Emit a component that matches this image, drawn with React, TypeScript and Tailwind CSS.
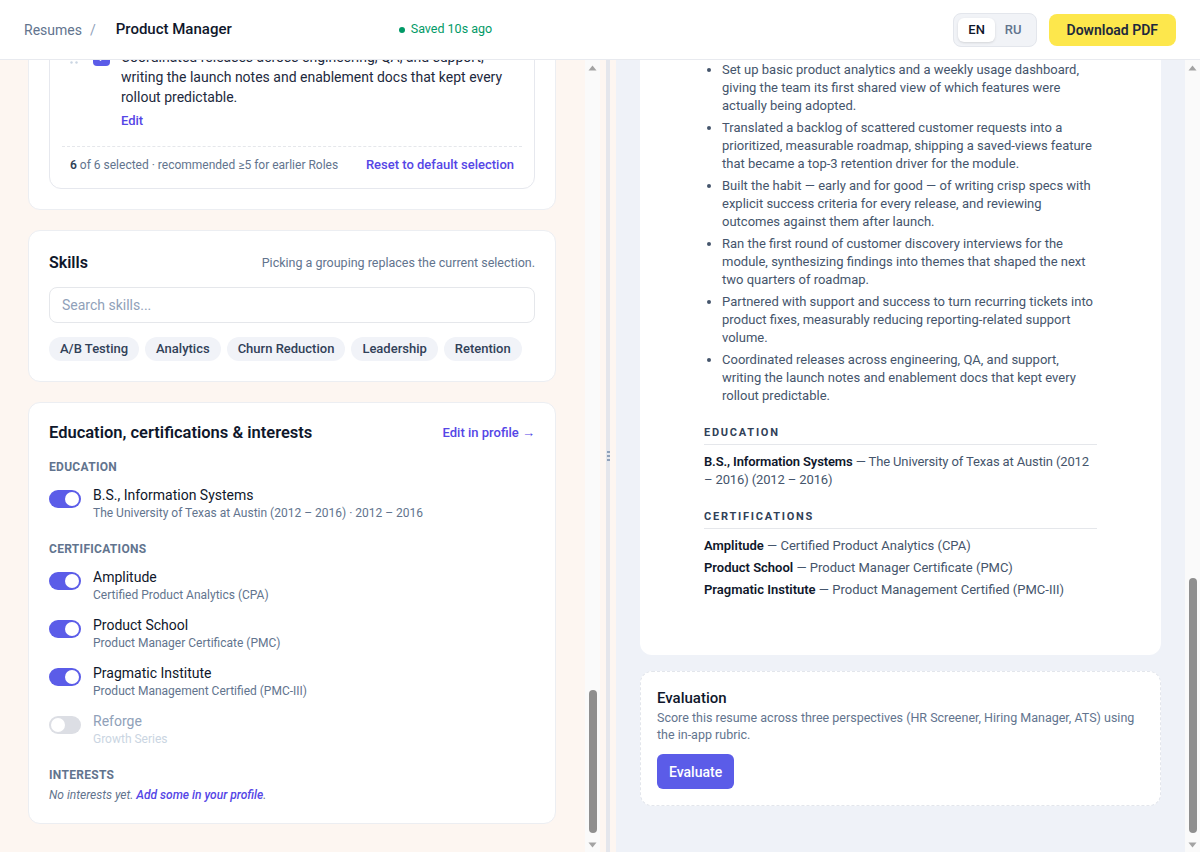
import { useLayoutEffect, useRef } from 'react';

type Role = {
  title: string;
  company: string;
  dates: string;
  bullets: string[];
};

const roles: Role[] = [
  {
    title: 'Senior Product Manager',
    company: 'Lumen Analytics',
    dates: 'Mar 2020 – Present',
    bullets: [
      'Owned the reporting suite roadmap end to end, growing weekly active accounts by 38% across two annual planning cycles.',
      'Led discovery with 40+ enterprise customers and turned the findings into a scheduled-exports launch that cut churn in the segment.',
      'Partnered with design and engineering leads to ship a self-serve onboarding flow, halving time-to-first-report for new teams.',
      'Defined the pricing and packaging for the analytics add-on, which reached $1.2M ARR within its first three quarters.',
      'Introduced a lightweight experiment review that raised the share of launches shipped with a measurable success metric.',
      'Mentored two associate PMs through their first launches and set up the team’s shared discovery repository.',
    ],
  },
  {
    title: 'Product Manager',
    company: 'Northwind Labs',
    dates: 'Jun 2018 – Feb 2020',
    bullets: [
      'Ran the integrations program, shipping connectors for Salesforce and HubSpot that drove 22% of new pipeline in 2019.',
      'Rebuilt the permissions model with engineering, unblocking three enterprise deals that had stalled in security review.',
      'Set quarterly OKRs with sales and support leadership and reported progress in a monthly product review.',
      'Cut the bug backlog by 60% by introducing severity triage and a weekly quality rotation across squads.',
      'Wrote the launch plans and customer-facing release notes for every major release in the product line.',
    ],
  },
  {
    title: 'Associate Product Manager',
    company: 'Brightline Software',
    dates: 'Jul 2016 – May 2018',
    bullets: [
      'Set up basic product analytics and a weekly usage dashboard, giving the team its first shared view of which features were actually being adopted.',
      'Translated a backlog of scattered customer requests into a prioritized, measurable roadmap, shipping a saved-views feature that became a top-3 retention driver for the module.',
      'Built the habit — early and for good — of writing crisp specs with explicit success criteria for every release, and reviewing outcomes against them after launch.',
      'Ran the first round of customer discovery interviews for the module, synthesizing findings into themes that shaped the next two quarters of roadmap.',
      'Partnered with support and success to turn recurring tickets into product fixes, measurably reducing reporting-related support volume.',
      'Coordinated releases across engineering, QA, and support, writing the launch notes and enablement docs that kept every rollout predictable.',
    ],
  },
];

const skills = ['A/B Testing', 'Analytics', 'Churn Reduction', 'Leadership', 'Retention'];

const certs = [
  { org: 'Amplitude', name: 'Certified Product Analytics (CPA)', on: true },
  { org: 'Product School', name: 'Product Manager Certificate (PMC)', on: true },
  { org: 'Pragmatic Institute', name: 'Product Management Certified (PMC-III)', on: true },
  { org: 'Reforge', name: 'Growth Series', on: false },
];

function Grip() {
  return (
    <svg width="8" height="12" viewBox="0 0 8 12" className="mt-[5px] shrink-0 fill-slate-300">
      <circle cx="1.5" cy="1.5" r="1.2" />
      <circle cx="6.5" cy="1.5" r="1.2" />
      <circle cx="1.5" cy="6" r="1.2" />
      <circle cx="6.5" cy="6" r="1.2" />
      <circle cx="1.5" cy="10.5" r="1.2" />
      <circle cx="6.5" cy="10.5" r="1.2" />
    </svg>
  );
}

function Checkbox() {
  return (
    <span className="ml-[15px] mt-[2px] flex h-[17px] w-[17px] shrink-0 items-center justify-center rounded-[4px] bg-[#5b5ce8]">
      <svg width="11" height="11" viewBox="0 0 12 12" fill="none">
        <path d="M2.5 6.3l2.4 2.4 4.8-5.2" stroke="white" strokeWidth="2" strokeLinecap="round" strokeLinejoin="round" />
      </svg>
    </span>
  );
}

function Toggle({ on }: { on: boolean }) {
  return (
    <span
      className={
        on
          ? 'mt-[5px] flex h-[18px] w-8 shrink-0 items-center justify-end rounded-full bg-[#5b5ce8] px-[2px]'
          : 'mt-[5px] flex h-[18px] w-8 shrink-0 items-center justify-start rounded-full bg-[#dcdee4] px-[2px]'
      }
    >
      <span className="h-[14px] w-[14px] rounded-full bg-white" />
    </span>
  );
}

// classic scrollbar look, drawn beside a pane whose own bar is hidden
function ScrollRail({ thumb }: { thumb: string }) {
  return (
    <div className="flex w-[15px] shrink-0 flex-col bg-[#fafafa]">
      <div className="flex h-[15px] items-center justify-center">
        <svg width="9" height="6" viewBox="0 0 9 6">
          <path d="M4.5 0.5L8.5 5.5H0.5Z" fill="#a3a3a3" />
        </svg>
      </div>
      <div className="flex flex-1 flex-col items-center justify-end pb-1">
        <div className={`w-2 rounded-full bg-[#8f8f8f] ${thumb}`} />
      </div>
      <div className="flex h-[15px] items-center justify-center">
        <svg width="9" height="6" viewBox="0 0 9 6">
          <path d="M0.5 0.5H8.5L4.5 5.5Z" fill="#a3a3a3" />
        </svg>
      </div>
    </div>
  );
}

function Card({ children }: { children: React.ReactNode }) {
  return <div className="rounded-xl border border-[#eceef2] bg-white p-5">{children}</div>;
}

function Field({ label, value }: { label: string; value: string }) {
  return (
    <div>
      <div className="mb-1 text-xs font-medium text-slate-500">{label}</div>
      <div className="flex h-9 items-center rounded-lg border border-gray-200 px-3 text-sm text-slate-800">{value}</div>
    </div>
  );
}

function RoleCard({ role }: { role: Role }) {
  return (
    <div className="rounded-xl border border-[#e6e8ee] p-3">
      <div className="flex items-start justify-between px-2 pb-2 pt-1">
        <div>
          <div className="text-sm font-semibold text-slate-900">{role.title}</div>
          <div className="text-xs text-slate-500">
            {role.company} · {role.dates}
          </div>
        </div>
        <span className="text-xs font-medium text-[#5546e6]">Edit role</span>
      </div>
      {role.bullets.map((b) => (
        <div key={b} className="flex items-start py-2 pl-2">
          <Grip />
          <Checkbox />
          <div className="ml-[11px] flex-1">
            <p className="text-sm leading-5 text-slate-800">{b}</p>
            <div className="mt-1.5 text-[13px] font-medium leading-4 text-[#5546e6]">Edit</div>
          </div>
        </div>
      ))}
      <div className="mt-[9px] flex items-center justify-between border-t border-dashed border-gray-200 px-2 pt-2.5 pb-[3px] leading-4">
        <span className="text-xs text-slate-500">
          <b className="font-semibold text-slate-700">{role.bullets.length}</b> of {role.bullets.length} selected ·
          recommended ≥5 for earlier Roles
        </span>
        <span className="text-[13px] font-medium text-[#5546e6]">Reset to default selection</span>
      </div>
    </div>
  );
}

function SectionHead({ children }: { children: React.ReactNode }) {
  return (
    <div className="border-b border-gray-200 pb-[3px] text-[11px] font-bold uppercase leading-4 tracking-[0.16em] text-slate-700">
      {children}
    </div>
  );
}

export default function App() {
  const leftRef = useRef<HTMLDivElement>(null);
  const rightRef = useRef<HTMLDivElement>(null);

  useLayoutEffect(() => {
    if (leftRef.current) leftRef.current.scrollTop = leftRef.current.scrollHeight;
    if (rightRef.current) rightRef.current.scrollTop = rightRef.current.scrollHeight;
  }, []);

  return (
    <div className="flex h-screen flex-col bg-white font-['Roboto',sans-serif] text-slate-900">
      {/* top bar */}
      <header className="flex h-[60px] shrink-0 items-center justify-between border-b border-[#e8eaef] bg-white px-6">
        <div className="flex items-center">
          <span className="text-sm text-slate-500">Resumes</span>
          <span className="ml-2 text-sm text-slate-400">/</span>
          <span className="ml-2 w-[283px] px-3 text-[15px] font-medium text-slate-900">Product Manager</span>
          <span className="ml-3 flex items-center gap-1.5 text-[12.5px] text-emerald-600">
            <span className="h-1.5 w-1.5 rounded-full bg-emerald-600" />
            Saved 10s ago
          </span>
        </div>
        <div className="flex items-center gap-3">
          <div className="flex h-[34px] items-center rounded-lg border border-[#e3e6ec] bg-[#f1f3f7] p-1">
            <span className="flex h-full items-center rounded-md bg-white px-2.5 text-[13px] font-medium text-slate-900 shadow-sm">
              EN
            </span>
            <span className="flex h-full items-center px-2.5 text-[13px] font-medium text-slate-500">RU</span>
          </div>
          <button className="h-8 rounded-lg bg-[#fde74c] px-[18px] text-sm font-semibold text-slate-800">
            Download PDF
          </button>
        </div>
      </header>

      <div className="flex min-h-0 flex-1">
        {/* editor */}
        <div className="flex w-[600px] shrink-0 bg-[#fdf6f1]">
          <div ref={leftRef} className="min-w-0 flex-1 overflow-y-auto [scrollbar-width:none]">
            <div className="flex flex-col gap-5 py-7 pl-7 pr-[29px]">
              <Card>
                <div className="mb-3 text-base font-semibold">Target job</div>
                <Field label="Job title" value="Product Manager" />
                <div className="mt-3 mb-1 text-xs font-medium text-slate-500">Job description</div>
                <div className="h-40 rounded-lg border border-gray-200 p-3 text-sm leading-5 text-slate-600">
                  We are looking for a Product Manager to own the analytics and reporting experience for our B2B
                  platform. You will partner with engineering, design and go-to-market teams to discover customer
                  problems, define the roadmap and ship measurable improvements.
                </div>
              </Card>

              <Card>
                <div className="mb-3 text-base font-semibold">Header</div>
                <div className="grid grid-cols-2 gap-3">
                  <Field label="Full name" value="Jordan Ellis" />
                  <Field label="Headline" value="Product Manager" />
                  <Field label="Email" value="jordan.ellis@mail.com" />
                  <Field label="Phone" value="+1 512 555 0147" />
                  <Field label="Location" value="Austin, TX" />
                  <Field label="LinkedIn" value="linkedin.com/in/jordanellis" />
                </div>
              </Card>

              <Card>
                <div className="mb-3 text-base font-semibold">Summary</div>
                <div className="h-32 rounded-lg border border-gray-200 p-3 text-sm leading-5 text-slate-700">
                  Product manager with 8+ years of experience building analytics and reporting products for B2B SaaS
                  teams. Known for turning messy customer feedback into focused roadmaps and shipping features that
                  move retention.
                </div>
              </Card>

              <Card>
                <div className="mb-3 flex items-center justify-between">
                  <div className="text-base font-semibold">Experience</div>
                  <span className="text-[13px] font-medium text-[#5546e6]">Edit in profile →</span>
                </div>
                <div className="flex flex-col gap-4">
                  {roles.map((r) => (
                    <RoleCard key={r.title} role={r} />
                  ))}
                </div>
              </Card>

              <Card>
                <div className="flex items-center justify-between">
                  <div className="text-base font-semibold leading-6">Skills</div>
                  <span className="text-[12.5px] text-slate-500">Picking a grouping replaces the current selection.</span>
                </div>
                <div className="mt-3 flex h-9 items-center rounded-lg border border-gray-200 px-3 text-sm text-slate-400">
                  Search skills...
                </div>
                <div className="mt-3.5 flex flex-wrap gap-1.5">
                  {skills.map((s) => (
                    <span
                      key={s}
                      className="flex h-6 items-center rounded-full bg-[#f1f3f8] px-[11px] text-[13px] font-medium text-slate-700"
                    >
                      {s}
                    </span>
                  ))}
                </div>
              </Card>

              <Card>
                <div className="flex items-center justify-between">
                  <div className="text-[16.5px] font-semibold leading-5">Education, certifications &amp; interests</div>
                  <span className="text-[13px] font-medium text-[#5546e6]">Edit in profile →</span>
                </div>

                <div className="mt-4 text-xs font-bold uppercase leading-4 tracking-wide text-slate-500">Education</div>
                <div className="mt-2.5 flex items-start gap-3">
                  <Toggle on />
                  <div>
                    <div className="text-sm leading-5 text-slate-900">B.S., Information Systems</div>
                    <div className="text-xs leading-4 text-slate-500">
                      The University of Texas at Austin (2012 – 2016) · 2012 – 2016
                    </div>
                  </div>
                </div>

                <div className="mt-5 text-xs font-bold uppercase leading-4 tracking-wide text-slate-500">
                  Certifications
                </div>
                <div className="mt-2.5 flex flex-col gap-3">
                  {certs.map((c) => (
                    <div key={c.org} className="flex items-start gap-3">
                      <Toggle on={c.on} />
                      <div>
                        <div className={c.on ? 'text-sm leading-5 text-slate-900' : 'text-sm leading-5 text-slate-400'}>
                          {c.org}
                        </div>
                        <div className={c.on ? 'text-xs leading-4 text-slate-500' : 'text-xs leading-4 text-slate-300'}>
                          {c.name}
                        </div>
                      </div>
                    </div>
                  ))}
                </div>

                <div className="mt-5 text-xs font-bold uppercase leading-4 tracking-wide text-slate-500">Interests</div>
                <div className="mt-1 text-xs italic leading-4 text-slate-500">
                  No interests yet. <span className="font-medium text-[#5546e6]">Add some in your profile</span>.
                </div>
              </Card>
            </div>
          </div>
          <ScrollRail thumb="h-[143px]" />
        </div>

        {/* resizer */}
        <div className="flex w-4 shrink-0 justify-center bg-[#fdf6f1]">
          <div className="flex w-1 flex-col items-center justify-center gap-[2px] bg-[#e4e6ec]">
            <span className="h-[2px] w-[3px] bg-slate-400" />
            <span className="h-[2px] w-[3px] bg-slate-400" />
            <span className="h-[2px] w-[3px] bg-slate-400" />
          </div>
        </div>

        {/* preview */}
        <div className="flex min-w-0 flex-1 bg-[#eff2f8]">
          <div ref={rightRef} className="min-w-0 flex-1 overflow-y-auto [scrollbar-width:none]">
            <div className="flex flex-col gap-4 px-6 pt-6 pb-[46px]">
              <div className="rounded-xl bg-white px-16 pt-16 pb-14">
                <div className="text-[26px] font-bold leading-8 text-slate-900">Jordan Ellis</div>
                <div className="mt-1 text-sm text-slate-600">Product Manager</div>
                <div className="mt-1 text-xs text-slate-500">
                  Austin, TX · jordan.ellis@mail.com · +1 512 555 0147 · linkedin.com/in/jordanellis
                </div>

                <div className="mt-5">
                  <SectionHead>Summary</SectionHead>
                  <p className="mt-2 text-[13px] leading-[18px] text-slate-600">
                    Product manager with 8+ years of experience building analytics and reporting products for B2B
                    SaaS teams. Known for turning messy customer feedback into focused roadmaps and shipping features
                    that move retention.
                  </p>
                </div>

                <div className="mt-5">
                  <SectionHead>Skills</SectionHead>
                  <p className="mt-2 text-[13px] leading-[18px] text-slate-600">
                    A/B Testing · Analytics · Churn Reduction · Leadership · Retention
                  </p>
                </div>

                <div className="mt-5">
                  <SectionHead>Experience</SectionHead>
                  {roles.map((r) => (
                    <div key={r.title} className="mt-3">
                      <div className="flex items-baseline justify-between text-[13px] leading-[18px]">
                        <span>
                          <b className="font-semibold text-slate-900">{r.title}</b>
                          <span className="text-slate-600"> — {r.company}</span>
                        </span>
                        <span className="text-xs text-slate-500">{r.dates}</span>
                      </div>
                      <ul className="mt-1.5 flex list-disc flex-col gap-1 pl-[18px] text-[13px] leading-[18px] text-slate-600 marker:text-slate-600">
                        {r.bullets.map((b) => (
                          <li key={b}>{b}</li>
                        ))}
                      </ul>
                    </div>
                  ))}
                </div>

                <div className="mt-5">
                  <SectionHead>Education</SectionHead>
                  <p className="mt-2 text-[13px] leading-[18px] tracking-[-0.01em] text-slate-600">
                    <b className="font-semibold text-slate-900">B.S., Information Systems</b> — The University of Texas
                    at Austin (2012 – 2016) (2012 – 2016)
                  </p>
                </div>

                <div className="mt-5">
                  <SectionHead>Certifications</SectionHead>
                  <div className="mt-2 flex flex-col gap-1 text-[13px] leading-[18px] text-slate-600">
                    {certs
                      .filter((c) => c.on)
                      .map((c) => (
                        <p key={c.org}>
                          <b className="font-semibold text-slate-900">{c.org}</b> — {c.name}
                        </p>
                      ))}
                  </div>
                </div>
              </div>

              <div className="rounded-xl border border-dashed border-[#e3e6ec] bg-white p-4">
                <div className="text-[15px] font-medium leading-5 text-slate-900">Evaluation</div>
                <p className="mt-px text-[12.5px] leading-[17px] text-slate-500">
                  Score this resume across three perspectives (HR Screener, Hiring Manager, ATS) using the in-app
                  rubric.
                </p>
                <button className="mt-[11px] h-[35px] rounded-md bg-[#5b5ce8] px-3 text-sm font-medium text-white">
                  Evaluate
                </button>
              </div>
            </div>
          </div>
          <ScrollRail thumb="h-[255px]" />
        </div>
      </div>
    </div>
  );
}
